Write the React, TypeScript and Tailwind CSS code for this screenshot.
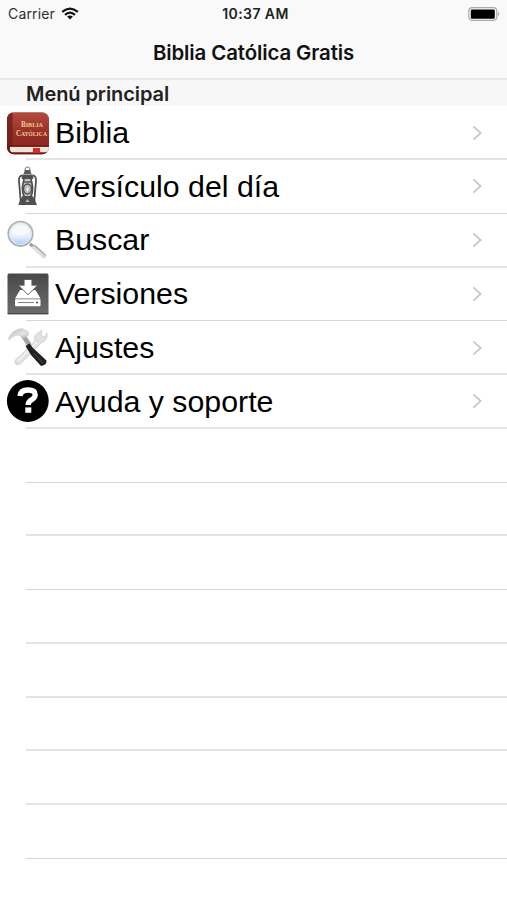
import React from 'react';

function BibleIcon() {
  return (
    <svg viewBox="0 0 60 54" className="h-[54px] w-[60px]">
      <defs>
        <linearGradient id="cover" x1="0" y1="0" x2="0" y2="1">
          <stop offset="0" stopColor="#b34c40" />
          <stop offset=".45" stopColor="#9a3128" />
          <stop offset="1" stopColor="#81231b" />
        </linearGradient>
        <clipPath id="bookShape"><rect x="7" y="6.2" width="42" height="42" rx="7" /></clipPath>
      </defs>
      <g clipPath="url(#bookShape)">
        <rect x="7" y="6" width="42" height="43" fill="url(#cover)" />
        <rect x="7" y="6" width="5.5" height="36" fill="#6e211a" opacity=".8" />
        <path d="M10 40.8H49V46.5H11Q8 44 10 40.8Z" fill="#e9e4df" />
        <path d="M7 39V49H49V46.5H13Q9 46 10 40.8H49V39.5Z" fill="#71170f" />
        <rect x="33" y="42" width="7" height="4.5" fill="#dc2a20" />
      </g>
      <text x="32" y="21.3" textAnchor="middle" textLength="22" lengthAdjust="spacingAndGlyphs" fill="#f2ca92" fontFamily="Liberation Serif, serif" fontWeight="bold" fontSize="7.2">B<tspan fontSize="6.2">IBLIA</tspan></text>
      <text x="31.5" y="29.5" textAnchor="middle" textLength="31" lengthAdjust="spacingAndGlyphs" fill="#f2ca92" fontFamily="Liberation Serif, serif" fontWeight="bold" fontSize="7.6">C<tspan fontSize="6.4">ATÓLICA</tspan></text>
    </svg>
  );
}

function LanternIcon() {
  return (
    <svg viewBox="0 0 60 54" className="h-[54px] w-[60px]" fill="none" stroke="#505050">
      <path d="M25 12Q25 8 27.5 8Q30 8 30 12" strokeWidth="1.2" stroke="#888" />
      <path d="M25 11H30L31.5 15H23.5Z" fill="#5a5a5a" stroke="none" />
      <path d="M22.5 15.5H32.5L33.5 20H21.5Z" fill="#505050" stroke="none" />
      <path d="M22.5 16.5Q18.6 16.5 19 22L20.7 42M32.5 16.5Q36.4 16.5 36 22L34.3 42" strokeWidth="1.8" />
      <path d="M24 20L22.5 27Q22 34 24.5 38H30.5Q33 34 32.5 27L31 20" fill="#c4c4c4" strokeWidth="1.7" />
      <path d="M23 23H32" strokeWidth="1.4" />
      <ellipse cx="27.5" cy="30" rx="4" ry="5" strokeWidth="1.5" />
      <path d="M27.6 26.5Q30 30 28.5 33H26.5Q25 30 27.6 26.5Z" fill="#fff" stroke="#777" strokeWidth=".5" />
      <path d="M22.5 37H32.5L35 41L36.9 46H18.3L20 41Z" fill="#505050" stroke="none" />
      <path d="M25.5 43L27.5 40L29.5 43Z" fill="#bbb" stroke="none" />
    </svg>
  );
}

function SearchIcon() {
  return (
    <svg viewBox="0 0 60 54" className="h-[54px] w-[60px]">
      <defs>
        <linearGradient id="lens" x1="0" y1="0" x2="0" y2="1">
          <stop offset="0" stopColor="#e9eff6" />
          <stop offset=".6" stopColor="#e6f0fc" />
          <stop offset="1" stopColor="#a0cbfb" />
        </linearGradient>
        <linearGradient id="handle" x1="0" y1="1" x2="1" y2="0">
          <stop offset=".35" stopColor="#f4f4f4" />
          <stop offset=".8" stopColor="#aaa" />
        </linearGradient>
      </defs>
      <path d="M30 31L34 34" stroke="#999" strokeWidth="3" />
      <path d="M31 35L34.5 31.5L46 42Q46.5 45 43.5 46Z" fill="url(#handle)" />
      <path d="M34.5 32L45.5 42" stroke="#929292" strokeWidth="1" />
      <circle cx="20.5" cy="20.8" r="12.2" fill="url(#lens)" stroke="#b0b0b0" strokeWidth="1.8" />
      <circle cx="20.5" cy="20.8" r="10.9" fill="none" stroke="#e5e9ed" strokeWidth=".8" />
      <path d="M11 20Q20 25 30 20Q28 12 20 12Q13 12 11 20Z" fill="#fff" opacity=".6" />
    </svg>
  );
}

function DownloadIcon() {
  return (
    <svg viewBox="0 0 60 54" className="h-[54px] w-[60px]">
      <defs>
        <linearGradient id="tile" x1="0" y1="0" x2="0" y2="1">
          <stop offset="0" stopColor="#484848" />
          <stop offset="1" stopColor="#6c6c6c" />
        </linearGradient>
      </defs>
      <rect x="7.5" y="6.5" width="41" height="41" rx="1.5" fill="url(#tile)" />
      <path d="M7.5 46.5H48.5" stroke="#444" />
      <path d="M20 23H35.5L40.5 31.5H15Z" fill="#fff" />
      <path d="M24.6 13H31.4V18.8H36.6L28 27.2L19.4 18.8H24.6Z" fill="#fff" stroke="#666" strokeWidth="1.5" paintOrder="stroke" />
      <rect x="15" y="32.3" width="25.5" height="7" rx="1" fill="#fff" />
      <path d="M18 35.5H34" stroke="#888" strokeWidth="1.1" />
      <path d="M36 35.5H38" stroke="#444" strokeWidth="1.5" />
    </svg>
  );
}

function ToolsIcon() {
  return (
    <svg viewBox="0 0 60 54" className="h-[54px] w-[60px]">
      <defs>
        <linearGradient id="steel" x1="0" y1="0" x2="1" y2="1">
          <stop offset="0" stopColor="#b5b5b5" />
          <stop offset=".55" stopColor="#e3e3e3" />
          <stop offset="1" stopColor="#bdbdbd" />
        </linearGradient>
      </defs>
      <path d="M20 14L24 12L33 25L29 28Z" fill="#a6a6a6" />
      <path d="M8.5 17Q12 9 22 7.5L28 10.5L28.5 14L24 17L20 14.5Q16 12.5 9 19Z" fill="url(#steel)" stroke="#bbb" strokeWidth=".5" />
      <path d="M38 12L42 9L41 14L45 16L47 12Q48 20 41 22L21.5 42Q16 46 14.5 41Q15 38 20 35L35 20Q33 14 38 12Z" fill="#e1e1e1" stroke="#ccc" strokeWidth=".7" />
      <path d="M18 40L37 21" stroke="#f6f6f6" strokeWidth="1.5" />
      <path d="M25.5 25L29.5 22.5L33 27L46.5 39.5Q47 44 41 45L31 34Z" fill="#222" />
      <path d="M34 32L43 42" stroke="#4b4b4b" strokeWidth="1" />
    </svg>
  );
}

function HelpIcon() {
  return (
    <svg viewBox="0 0 60 54" className="h-[54px] w-[60px]">
      <circle cx="27.8" cy="27" r="20.9" fill="#000" />
      <path d="M20 22Q20.6 16 28 16Q35.2 16 35.2 20.8Q35.2 23.8 31.5 25.8Q28.2 27.7 28.2 31" fill="none" stroke="#fff" strokeWidth="5.3" />
      <rect x="25.3" y="33.4" width="6" height="5.4" fill="#fff" />
    </svg>
  );
}

const menu = [
  { label: 'Biblia', Icon: BibleIcon, soft: true },
  { label: 'Versículo del día', Icon: LanternIcon, soft: false },
  { label: 'Buscar', Icon: SearchIcon, soft: true },
  { label: 'Versiones', Icon: DownloadIcon, soft: false },
  { label: 'Ajustes', Icon: ToolsIcon, soft: true },
  { label: 'Ayuda y soporte', Icon: HelpIcon, soft: true },
];

const emptyRows = [false, true, false, true, true, true, true, false];

function Separator({ soft }: { soft: boolean }) {
  return <div className={soft ? '-mt-px ml-[26px] h-0.5 bg-[#e4e4e4]' : 'ml-[26px] h-px bg-[#d5d5d5]'} />;
}

export default function App() {
  return (
    <div className="flex h-[900px] w-[507px] flex-col overflow-hidden bg-white text-black">
      <header className="h-[80px] shrink-0 border-b-2 border-[#e8e8e8] bg-[#f9f9f9] font-['Inter',sans-serif]">
        <div className="grid h-7 grid-cols-3 items-center pr-[7px] pl-2">
          <div className="flex items-center gap-[6px]">
            <span className="-mt-px text-[14px] tracking-[0.15px] text-[#303030]">Carrier</span>
            <svg viewBox="0 0 18 13" className="-mt-px h-[13px] w-[18px]" fill="none" stroke="#111" strokeWidth="2.2">
              <path d="M1.2 4.9Q9-1.7 16.8 4.9M4 7.8Q9 3.4 14 7.8" />
              <path d="M6.1 9.6Q9 7.2 11.9 9.6L9 12.6Z" fill="#111" stroke="none" />
            </svg>
          </div>
          <span className="-mt-px pl-[3px] text-center text-[14px] font-semibold tracking-[0.4px] whitespace-nowrap text-[#222]">10:37 AM</span>
          <svg viewBox="0 0 32 14" className="-mt-px h-[14px] w-8 justify-self-end">
            <rect x=".8" y=".7" width="28" height="12.6" rx="3.5" fill="#f9f9f9" stroke="#aaa" strokeWidth="1.2" />
            <rect x="2.8" y="2.4" width="24" height="9.4" rx="1.3" fill="#000" />
            <path d="M30.2 4.8Q32.2 7 30.2 9.2Z" fill="#999" />
          </svg>
        </div>
        <h1 className="text-center text-[20.4px] leading-[49px] font-semibold tracking-[-0.1px] text-[#111]">Biblia Católica Gratis</h1>
      </header>
      <h2 className="h-[26px] shrink-0 bg-[#f7f7f7] pl-[26px] font-['Inter',sans-serif] text-[20px] leading-[28px] font-semibold tracking-[-0.07px] text-[#222]">Menú principal</h2>
      <main className="font-['Liberation_Sans',Arial,sans-serif]">
        {menu.map(({ label, Icon, soft }) => (
          <div key={label} className="h-[53.77px]">
            <div className="flex h-[53px] items-center">
              <div className="-mr-[5px] shrink-0"><Icon /></div>
              <span className="flex-1 pt-[0.85px] text-[30.3px] leading-[54px] whitespace-nowrap">{label}</span>
              <svg viewBox="0 0 12 18" className="mr-6 h-[18px] w-3" fill="none" stroke="#c8c8cb" strokeWidth="1.8">
                <path d="M2.3 2.3L9.7 9L2.3 15.7" />
              </svg>
            </div>
            <Separator soft={soft} />
          </div>
        ))}
        {emptyRows.map((soft, row) => (
          <div key={row} className="h-[53.77px] pt-[53px]">
            <Separator soft={soft} />
          </div>
        ))}
      </main>
    </div>
  );
}
